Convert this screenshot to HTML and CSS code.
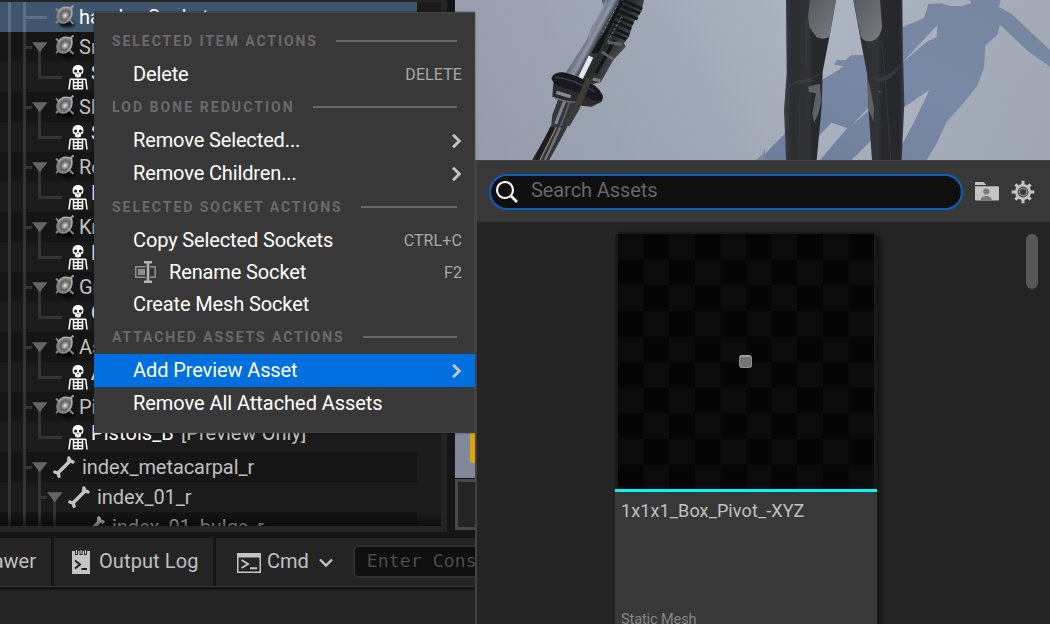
FILE: index.html
```html
<!DOCTYPE html>
<html lang="en">
<head>
<meta charset="utf-8">
<title>Skeleton Editor</title>
<link rel="stylesheet" href="styles.css">
</head>
<body>
<svg class="defs" width="0" height="0">
  <defs>
    <radialGradient id="dish" cx="52%" cy="55%" r="55%">
      <stop offset="0" stop-color="#f0f0f0"/><stop offset=".2" stop-color="#aaa"/>
      <stop offset=".5" stop-color="#606060"/><stop offset=".78" stop-color="#8a8a8a"/><stop offset="1" stop-color="#6c6c6c"/>
    </radialGradient>
    <filter id="soft"><feGaussianBlur stdDeviation="1.2"/></filter>
    <filter id="slight"><feGaussianBlur stdDeviation=".35"/></filter>
    <symbol id="socket" viewBox="0 0 24 26">
      <ellipse cx="13" cy="20" rx="8" ry="3.500" fill="#000" opacity=".75" filter="url(#soft)"/>
      <g filter="url(#slight)">
        <path d="M2 4.500L5 7.500M2 19L5 16M15 15.500L19.500 20" stroke="#858585" stroke-width="2"/>
        <ellipse cx="10.300" cy="11.300" rx="9" ry="7.600" transform="rotate(-50 10.300 11.300)" fill="url(#dish)"/>
        <path d="M4 8C7 3.500 12 2 17.500 4.500C18.700 9 17 14 13 17" fill="none" stroke="#a8a8a8" stroke-width="1.500"/>
        <path d="M15.500 5L19.500 1.500" stroke="#a0a0a0" stroke-width="2"/>
      </g>
    </symbol>
    <symbol id="skeleton" viewBox="0 0 20 25">
      <path fill="#fff" fill-rule="evenodd" d="M10 0C6.300 0 4.600 2.300 4.600 5.200C4.600 7.800 5.100 9 7 9.300L7.200 11.700Q10 13.200 12.800 11.700L13 9.300C14.900 9 15.400 7.800 15.400 5.200C15.400 2.300 13.700 0 10 0ZM7.600 4.500A1.600 1.600 0 1 1 7.600 7.700A1.600 1.600 0 1 1 7.600 4.500ZM12.400 4.500A1.600 1.600 0 1 1 12.400 7.700A1.600 1.600 0 1 1 12.400 4.500ZM10 7.600L9.100 9.200H10.900Z"/>
      <path d="M1.800 14.200H5.400M14.600 14.200H18.200M2.300 14L1 24.500M17.700 14L19 24.500M10 13.500V24.500M5.300 14.200H14.700M5.500 17.500H14.500M5.500 20.700H14.500M5 23.700H15M5.500 14V24M14.500 14V24" fill="none" stroke="#fff" stroke-width="1.500"/>
    </symbol>
    <symbol id="bone" viewBox="0 0 22 22">
      <path d="M4.500 17.500L17 5" stroke="#c4c4c4" stroke-width="3.600"/>
      <path d="M15.500 4.500L18 5L20 6M17 4.500L15.800 2M1.800 16L4.500 17L5.500 18L6 20.300" fill="none" stroke="#c4c4c4" stroke-width="3.300" stroke-linecap="round" stroke-linejoin="round"/>
    </symbol>
    <symbol id="rails" viewBox="0 0 54 30">
      <path d="M9.500 0V30M24.500 0V30" stroke="#343434" stroke-width="3"/>
    </symbol>
    <symbol id="rail-parent" viewBox="0 0 54 30">
      <use href="#rails" width="54" height="30"/>
      <path d="M26 15.500H32M39.500 18V30" stroke="#343434" stroke-width="3"/>
      <path d="M32 10.300H47.500L39.750 20.300Z" fill="#656565"/>
    </symbol>
    <symbol id="rail-leaf" viewBox="0 0 68 30">
      <path d="M9.500 0V30M24.500 0V30M39.500 0V15.500H62" fill="none" stroke="#343434" stroke-width="3"/>
    </symbol>
    <symbol id="chevron" viewBox="0 0 10 14">
      <path d="M1 .8L7.300 7L1 13.200" fill="none" stroke="#c4c4c4" stroke-width="2.900"/>
    </symbol>
  </defs>
</svg>
<div class="editor">
  <div class="workspace">
    <section class="tree-panel">
      <div class="tree">
        <div class="row selected"><svg class="rail" viewBox="0 0 54 30"><path d="M9.500 0V30M24.500 0V30M26 15.500H47" stroke="#5c7186" stroke-width="3"/></svg><svg class="socket"><use href="#socket"/></svg><span>hand_r_Socket</span></div>
        <div class="row odd"><svg class="rail"><use href="#rail-parent"/></svg><svg class="socket"><use href="#socket"/></svg><span>Sniper</span></div>
        <div class="row leaf"><svg class="rail-wide"><use href="#rail-leaf"/></svg><svg class="skeleton"><use href="#skeleton"/></svg><span>Sniper</span></div>
        <div class="row odd"><svg class="rail"><use href="#rail-parent"/></svg><svg class="socket"><use href="#socket"/></svg><span>Shotgun</span></div>
        <div class="row leaf"><svg class="rail-wide"><use href="#rail-leaf"/></svg><svg class="skeleton"><use href="#skeleton"/></svg><span>Shotgun</span></div>
        <div class="row odd"><svg class="rail"><use href="#rail-parent"/></svg><svg class="socket"><use href="#socket"/></svg><span>Rocket</span></div>
        <div class="row leaf"><svg class="rail-wide"><use href="#rail-leaf"/></svg><svg class="skeleton"><use href="#skeleton"/></svg><span>Rocket</span></div>
        <div class="row odd"><svg class="rail"><use href="#rail-parent"/></svg><svg class="socket"><use href="#socket"/></svg><span>Knife</span></div>
        <div class="row leaf"><svg class="rail-wide"><use href="#rail-leaf"/></svg><svg class="skeleton"><use href="#skeleton"/></svg><span>Knife</span></div>
        <div class="row odd"><svg class="rail"><use href="#rail-parent"/></svg><svg class="socket"><use href="#socket"/></svg><span>Grenade</span></div>
        <div class="row leaf"><svg class="rail-wide"><use href="#rail-leaf"/></svg><svg class="skeleton"><use href="#skeleton"/></svg><span>Grenade</span></div>
        <div class="row odd"><svg class="rail"><use href="#rail-parent"/></svg><svg class="socket"><use href="#socket"/></svg><span>Assault</span></div>
        <div class="row leaf"><svg class="rail-wide"><use href="#rail-leaf"/></svg><svg class="skeleton"><use href="#skeleton"/></svg><span>Assault</span></div>
        <div class="row odd"><svg class="rail"><use href="#rail-parent"/></svg><svg class="socket"><use href="#socket"/></svg><span>Pistols</span></div>
        <div class="row leaf"><svg class="rail-wide"><use href="#rail-leaf"/></svg><svg class="skeleton"><use href="#skeleton"/></svg><span>Pistols_B <i class="note">[Preview Only]</i></span></div>
        <div class="row odd bone-row"><svg class="rail"><use href="#rail-parent"/></svg><svg class="bone"><use href="#bone"/></svg><span>index_metacarpal_r</span></div>
        <div class="row bone-row"><svg class="rail-l2" viewBox="0 0 68 30"><path d="M9.500 0V30M24.500 0V30M39.500 0V30M41 15.500H47M54.500 18V30" stroke="#343434" stroke-width="3"/><path d="M47 10.300H62.500L54.750 20.300Z" fill="#656565"/></svg><svg class="bone"><use href="#bone"/></svg><span>index_01_r</span></div>
        <div class="row odd bone-row"><svg class="rail-l3" viewBox="0 0 83 30"><path d="M9.500 0V30M24.500 0V30M39.500 0V30M54.500 0V30" stroke="#343434" stroke-width="3"/></svg><svg class="bone"><use href="#bone"/></svg><span>index_01_bulge_r</span></div>
      </div>
    </section>
    <section class="stage">
      <svg class="viewport" width="595" height="478" viewBox="0 0 595 478">
        <defs>
          <linearGradient id="floor" x1="0" y1=".1" x2="1" y2="0">
            <stop offset="0" stop-color="#989eae"/><stop offset=".35" stop-color="#a2a9b8"/><stop offset=".62" stop-color="#adb5c2"/><stop offset="1" stop-color="#a3a9b6"/>
          </linearGradient>
          <linearGradient id="floor-dim" x1="0" y1="0" x2="0" y2="1">
            <stop offset="0" stop-color="#7d8595" stop-opacity="0"/><stop offset=".33" stop-color="#7d8595" stop-opacity=".12"/><stop offset="1" stop-color="#7f8799"/>
          </linearGradient>
          <linearGradient id="cast" x1="1" y1="0" x2="0" y2="1">
            <stop offset="0" stop-color="#77869e"/><stop offset=".5" stop-color="#7988a4"/><stop offset="1" stop-color="#6e7d9b"/>
          </linearGradient>
          <linearGradient id="leg" x1="0" y1="0" x2="1" y2="0">
            <stop offset="0" stop-color="#3b3e43"/><stop offset=".15" stop-color="#2b2d30"/><stop offset=".48" stop-color="#313336"/><stop offset=".55" stop-color="#27292c"/><stop offset=".9" stop-color="#25272a"/><stop offset="1" stop-color="#383c43"/>
          </linearGradient>
          <linearGradient id="thigh" x1="0" y1="0" x2="1" y2="1">
            <stop offset="0" stop-color="#575a61"/><stop offset="1" stop-color="#797b7f"/>
          </linearGradient>
          <linearGradient id="barrel" gradientUnits="userSpaceOnUse" x1="325" y1="60" x2="445" y2="125">
            <stop offset="0" stop-color="#32363a"/><stop offset=".2" stop-color="#606671"/><stop offset=".38" stop-color="#8c93a3"/><stop offset=".5" stop-color="#353a40"/><stop offset=".7" stop-color="#25292b"/><stop offset="1" stop-color="#404446"/>
          </linearGradient>
        </defs>
        <rect width="595" height="478" fill="url(#floor)"/>
        <rect width="595" height="478" fill="url(#floor-dim)"/>
        <g transform="translate(305 0) scale(.33333)">
          <path fill="url(#cast)" d="M425 82C460 65 490 60 493 50L505 12L545 10L570 18L605 18L635 10L628 0H722L716 20L755 42L790 75L870 150V200L800 150L720 74L712 105L676 135L672 205L650 260L600 322L560 365L530 430L500 480H425V435L460 370L508 270L430 325L275 480H180L262 384L215 368L170 415L150 480H0L35 440L78 398L170 250L235 210L250 198L222 194L230 180L255 180L275 165L310 165L350 150L425 145Z"/>
          <path fill="#aab1bf" d="M425 190L532 76L530 112L500 125ZM270 380L340 308L322 335ZM425 435L460 370L508 270L425 327Z"/>
          <path fill="url(#leg)" d="M78 0H228L212 90L188 215L185 320L170 480H78L72 330L80 220Z"/>
          <path fill="url(#leg)" d="M280 0H427L429 170L433 310L425 480H336L325 320L322 225L302 120Z"/>
          <path fill="url(#thigh)" d="M150 0H228L208 112Q188 120 170 112L148 82L144 50Z"/>
          <path fill="url(#thigh)" d="M280 0H360L366 80Q360 120 330 124Q310 124 302 110Z"/>
          <path fill="#5d6169" d="M144 260Q160 254 180 252L184 300L176 340L162 368L157 340L168 280L147 276ZM322 232L331 265L342 325L340 364L326 330ZM351 273L365 275L360 279Z"/>
          <path d="M78 265Q110 225 180 245Q115 240 78 265M188 215Q155 245 115 253M322 225Q350 245 390 220Q415 200 429 185Q405 238 360 246" fill="#45494f" opacity=".45"/>
          <path d="M140 60L138 210M120 290L117 480M365 120L374 210L392 480" stroke="#414448" stroke-width="3" fill="none" opacity=".5"/>
        </g>
        <g transform="translate(20 0) scale(.33333)">
          <path fill="#7e8799" d="M870 445Q862 470 842 480H870Z"/>
          <path fill="#35373b" d="M232 345L250 296H318L304 325L268 398L223 480H171L228 382Z"/>
          <path d="M233 382L184 480" stroke="#211b1c" stroke-width="14"/>
          <path d="M244 382L195 480" stroke="#a39b91" stroke-width="3"/>
          <path d="M256 382L210 480" stroke="#6d7474" stroke-width="7"/>
          <path d="M270 300L242 372" stroke="#7f8493" stroke-width="9"/>
          <path d="M288 296L257 378" stroke="#555b66" stroke-width="6"/>
          <path fill="url(#barrel)" d="M380 0H507L500 34L474 70L462 110L447 130L452 140L440 153L415 180L378 246L354 252L270 222L335 120L348 86L386 20Z"/>
          <path d="M445 2L502 27M438 17L495 40M431 33L488 57M424 48L475 72M417 65L468 87M411 82L462 105M404 98L454 118" stroke="#151719" stroke-width="9"/>
          <path d="M440 2L365 158M394 95L354 160M419 120L363 220" stroke="#111617" stroke-width="10"/>
          <path d="M405 20L310 195M394 5L340 112" stroke="#8d94a6" stroke-width="7" opacity=".75"/>
          <path d="M348 170L316 235" stroke="#e5e7e9" stroke-width="15"/>
          <path d="M430 10L380 105M440 50L395 130" stroke="#7b8582" stroke-width="3" stroke-dasharray="8 5"/>
          <path d="M235 250L290 270L384 284L380 305L350 320L325 318L232 290Z" fill="#292b2e"/>
          <path d="M244 277L287 290" stroke="#858a97" stroke-width="10"/>
          <path d="M239 294Q280 308 310 307" stroke="#696b68" stroke-width="4" fill="none"/>
          <path fill="#17191e" d="M229 235Q237 214 265 217Q315 228 360 257Q388 280 382 301Q355 308 315 280Q265 264 238 252Z"/>
          <path d="M240 231Q290 235 359 275" stroke="#3a3f49" stroke-width="5" fill="none"/>
          <path d="M343 235L304 325L275 375" stroke="#3c3b37" stroke-width="19" fill="none"/>
          <path d="M353 237L376 242" stroke="#777b7c" stroke-width="9"/>
          <path d="M398 127L440 133M380 155L415 178" stroke="#5b5e59" stroke-width="9"/>
        </g>
        <rect x="15" y="420" width="30" height="43" rx="3" fill="#dfa307"/>
      </svg>
      <div class="timeline"></div>
    </section>
  </div>
  <footer class="statusbar">
    <div class="tab drawer"><span>Content Drawer</span></div>
    <div class="tab output">
      <svg width="18" height="24" viewBox="0 0 18 24"><path fill="#c4c4c4" d="M0 1H3V5H6V1H7.500V5H10.500V1H12V5H15V1H18V24H0Z"/><path d="M4.500 0V4M9 0V4M13.500 0V4" stroke="#c4c4c4" stroke-width="1.200"/><path d="M3 10.500L8 14.500L3 18.500M9.500 19H15" fill="none" stroke="#1e1e1e" stroke-width="2"/></svg>
      <span>Output Log</span>
    </div>
    <div class="tab cmd">
      <svg width="24" height="20" viewBox="0 0 24 20"><rect x=".75" y=".75" width="22.500" height="18.500" fill="none" stroke="#c4c4c4" stroke-width="1.500"/><path fill="#c4c4c4" d="M0 0H24V4.500H0Z"/><path d="M4.500 7L11 11L4.500 15M13 15.300H20" fill="none" stroke="#c4c4c4" stroke-width="1.900"/></svg>
      <span>Cmd</span>
      <svg class="caret" width="14" height="10" viewBox="0 0 14 10"><path d="M1 1.500L7 7.500L13 1.500" fill="none" stroke="#c4c4c4" stroke-width="2.400"/></svg>
      <div class="console">Enter Console Command</div>
    </div>
  </footer>
  <div class="bottom"></div>
</div>

<nav class="menu">
  <div class="heading"><span>SELECTED ITEM ACTIONS</span><hr></div>
  <div class="item"><span>Delete</span><kbd>DELETE</kbd></div>
  <div class="heading lod"><span>LOD BONE REDUCTION</span><hr></div>
  <div class="item"><span>Remove Selected...</span><svg class="chev"><use href="#chevron"/></svg></div>
  <div class="item"><span>Remove Children...</span><svg class="chev"><use href="#chevron"/></svg></div>
  <div class="heading tall"><span>SELECTED SOCKET ACTIONS</span><hr></div>
  <div class="item"><span>Copy Selected Sockets</span><kbd>CTRL+C</kbd></div>
  <div class="item short"><svg class="rename" width="22" height="22" viewBox="0 0 22 22"><path d="M10.500 5.750H.75V16.250H10.500M15 5.750H20.250V16.250H15" fill="none" stroke="#8e8e8e" stroke-width="1.500"/><rect x="3" y="8" width="7" height="6" fill="#8e8e8e"/><path d="M9 1.250H17M9 20.750H17M13 1V21" stroke="#b4b4b4" stroke-width="2.500"/></svg><span>Rename Socket</span><kbd>F2</kbd></div>
  <div class="item short"><span>Create Mesh Socket</span></div>
  <div class="heading attached"><span>ATTACHED ASSETS ACTIONS</span><hr></div>
  <div class="item active"><span>Add Preview Asset</span><svg class="chev"><use href="#chevron"/></svg></div>
  <div class="item last"><span>Remove All Attached Assets</span></div>
</nav>

<aside class="picker">
  <div class="toolbar">
    <div class="search">
      <svg width="24" height="24" viewBox="0 0 24 24"><circle cx="10" cy="10" r="8" fill="none" stroke="#fff" stroke-width="2.200"/><path d="M15.500 15.500L22 22" stroke="#fff" stroke-width="2.600"/></svg>
      <span>Search Assets</span>
    </div>
    <svg class="folder" width="24" height="19" viewBox="0 0 24 19"><path fill="#c4c4c4" d="M0 1Q0 0 1 0H8.500L11.500 3H0ZM0 4.200H23Q24 4.200 24 5V17.500Q24 18.500 23 18.500H1Q0 18.500 0 17.500Z"/><circle cx="11.300" cy="9.500" r="3.100" fill="#7b7b7b"/><path fill="#7b7b7b" d="M5.500 18.500Q6 14 11.300 14Q16.800 14 17 18.500Z"/></svg>
    <svg class="gear" width="24" height="24" viewBox="-12 -12 24 24"><path d="M0-11.300V11.300M-11.300 0H11.300M-7.600-7.600L7.600 7.600M-7.600 7.600L7.600-7.600" stroke="#c4c4c4" stroke-width="3"/><circle r="6.700" fill="#383838" stroke="#c4c4c4" stroke-width="2.600"/><circle r="3.700" fill="none" stroke="#858585" stroke-width="1.600"/></svg>
  </div>
  <div class="assets">
    <article class="tile">
      <div class="thumb"><div class="checker"><span class="cube"></span></div></div>
      <div class="caption"><strong>1x1x1_Box_Pivot_-XYZ</strong><small>Static Mesh</small></div>
    </article>
    <div class="scrollbar"></div>
  </div>
</aside>
</body>
</html>
```

FILE: styles.css
```css
* { box-sizing: border-box; }
html, body { margin: 0; height: 624px; overflow: hidden; }
body {
  position: relative;
  width: 1050px;
  background: #151515;
  font: 20px/30px Roboto, "Noto Sans", sans-serif;
  color: #c0c0c0;
}
svg { display: block; flex: none; }
.defs { position: absolute; }

.editor { display: flex; flex-direction: column; height: 624px; }
.workspace { display: flex; gap: 8px; height: 532px; margin-bottom: 6px; }

.tree-panel {
  width: 447px;
  flex: none;
  padding: 0 6px 6px 0;
  background: #242424;
}
.tree {
  position: relative;
  height: 526px;
  padding-top: 2px;
  overflow: hidden;
  background: linear-gradient(#242424 2px, #1b1b1b 2px);
}
.tree::after {
  content: "";
  position: absolute;
  inset: auto 0 0 0;
  height: 14px;
  background: linear-gradient(transparent, rgba(0, 0, 0, .5));
}
.row { display: flex; align-items: center; width: 417px; height: 30px; white-space: nowrap; }
.row.odd { background: #151515; }
.row.selected { background: #40566f; color: #fff; }
.row.leaf { color: #fff; }
.row.leaf span { margin-bottom: 8px; letter-spacing: .07px; }
.note { margin-left: 2px; font-style: normal; color: #c0c0c0; }
.rail { width: 54px; height: 30px; }
.rail-wide { width: 68px; height: 30px; }
.rail-l2 { width: 68px; height: 30px; }
.rail-l3 { width: 83px; height: 30px; }
.socket { width: 24px; height: 26px; margin-right: 1px; }
.skeleton { width: 20px; height: 25px; margin: 0 3px 0 0; }
.bone { width: 22px; height: 22px; margin: 0 6px 0 -1px; }
.bone-row span { margin-left: 1px; letter-spacing: -.06px; }
.rail-l2 + .bone, .rail-l3 + .bone { margin-left: 0; }

.stage { display: flex; flex-direction: column; flex: 1; height: 532px; overflow: hidden; }
.timeline { height: 51px; flex: none; margin-top: 1px; border: 3px solid #484848; background: #242424; }

.statusbar {
  display: flex;
  gap: 3px;
  height: 49px;
  flex: none;
  border-bottom: 1px solid #343434;
}
.tab { display: flex; align-items: center; height: 48px; background: #242424; white-space: nowrap; padding-bottom: 2px; }
.drawer { width: 51px; justify-content: flex-end; padding-right: 15px; }
.output { width: 159px; padding-left: 18px; }
.output span { margin-left: 9px; letter-spacing: .1px; }
.output svg { margin-top: 1px; }
.cmd { flex: 1; padding-left: 21px; }
.cmd > svg:first-child { margin-top: 4px; }
.cmd span { margin-left: 6px; }
.caret { margin: 4px 0 0 10px; }
.console {
  width: 400px;
  height: 33px;
  margin-left: 20px;
  padding-left: 12px;
  border: 2px solid #303030;
  border-radius: 6px;
  background: #0f0f0f;
  color: #4c4c4c;
  font: 18px/28px "DejaVu Sans Mono", monospace;
  letter-spacing: .15px;
}
.bottom { flex: 1; margin-top: 3px; background: #242424; }

.menu {
  position: absolute;
  left: 94px;
  top: 12px;
  width: 381px;
  height: 421px;
  padding-top: 11px;
  border-top: 1px solid #484848;
  background: #383838;
  color: #fff;
  box-shadow: 0 0 2px #0008, inset -1px -1px 0 #424242;
}
.heading { display: flex; align-items: center; height: 33px; padding: 0 18px; font-size: 14px; font-weight: 700; color: #6a6a6a; letter-spacing: 1.930px; white-space: nowrap; }
.heading.lod { letter-spacing: 2.060px; }
.heading.tall { height: 34px; padding-top: 1px; letter-spacing: 1.970px; }
.heading.attached { height: 34px; padding-bottom: 1px; letter-spacing: 1.910px; }
.heading hr { flex: 1; height: 2px; margin: 0 0 0 18px; border: 0; background: #686868; }
.item { display: flex; align-items: center; height: 33px; padding: 0 13px 0 39px; letter-spacing: -.13px; white-space: nowrap; }
.item.short { height: 32px; }
.item.active { background: #0070e0; padding-bottom: 1px; letter-spacing: -.1px; }
.item.last { letter-spacing: -.05px; padding-bottom: 1px; }
.item kbd { margin: 2px 0 0 auto; font: 16px/30px Roboto, sans-serif; letter-spacing: .1px; color: #a8a8a8; }
.chev { width: 10px; height: 14px; margin: 2px 0.5px 0 auto; }
.rename { margin: 0 12px 0 2px; }

.picker {
  position: absolute;
  left: 475px;
  top: 160px;
  width: 575px;
  height: 464px;
  border-left: 2px solid #424242;
  background: #242424;
}
.toolbar { display: flex; align-items: center; height: 62px; padding: 0 15px 0 12px; border-top: 1px solid #444; background: #383838; }
.search {
  display: flex;
  align-items: center;
  width: 474px;
  height: 36px;
  padding-left: 4px;
  border: 2px solid #0c5fbd;
  border-radius: 18px;
  background: #0f0f0f;
  color: #666;
}
.search span { margin: -3px 0 0 12px; letter-spacing: -.08px; }
.folder { margin-left: 12px; }
.gear { margin-left: 12px; }
.assets { display: flex; justify-content: space-between; padding: 10px 12px 0 138px; height: 402px; overflow: hidden; }
.tile { width: 262px; height: 420px; flex: none; border-radius: 5px; background: #383838; box-shadow: 4px 3px 5px #0007; }
.thumb { padding: 2px 3px 0; height: 260px; border-bottom: 3px solid #00f8f8; border-radius: 5px 5px 0 0; background: #191919; }
.checker {
  display: flex;
  align-items: center;
  justify-content: center;
  height: 255px;
  background: repeating-conic-gradient(#050505 0 25%, #0b0b0b 0 50%) 0 0 / 51.200px 51.200px;
}
.cube { width: 13px; height: 13px; margin-right: 2px; border-radius: 3px; border: 1px solid #8c8c8c; border-top: 2px solid #a0a0a0; background: #747474; }
.caption { display: flex; flex-direction: column; padding: 4px 6px; }
.caption strong { font-size: 18px; font-weight: 400; letter-spacing: .12px; }
.caption small { margin-top: 79px; font-size: 14.500px; color: #868686; letter-spacing: -.1px; }
.scrollbar { width: 12px; height: 55px; margin-top: 2px; border-radius: 6px; background: #575757; }
```
